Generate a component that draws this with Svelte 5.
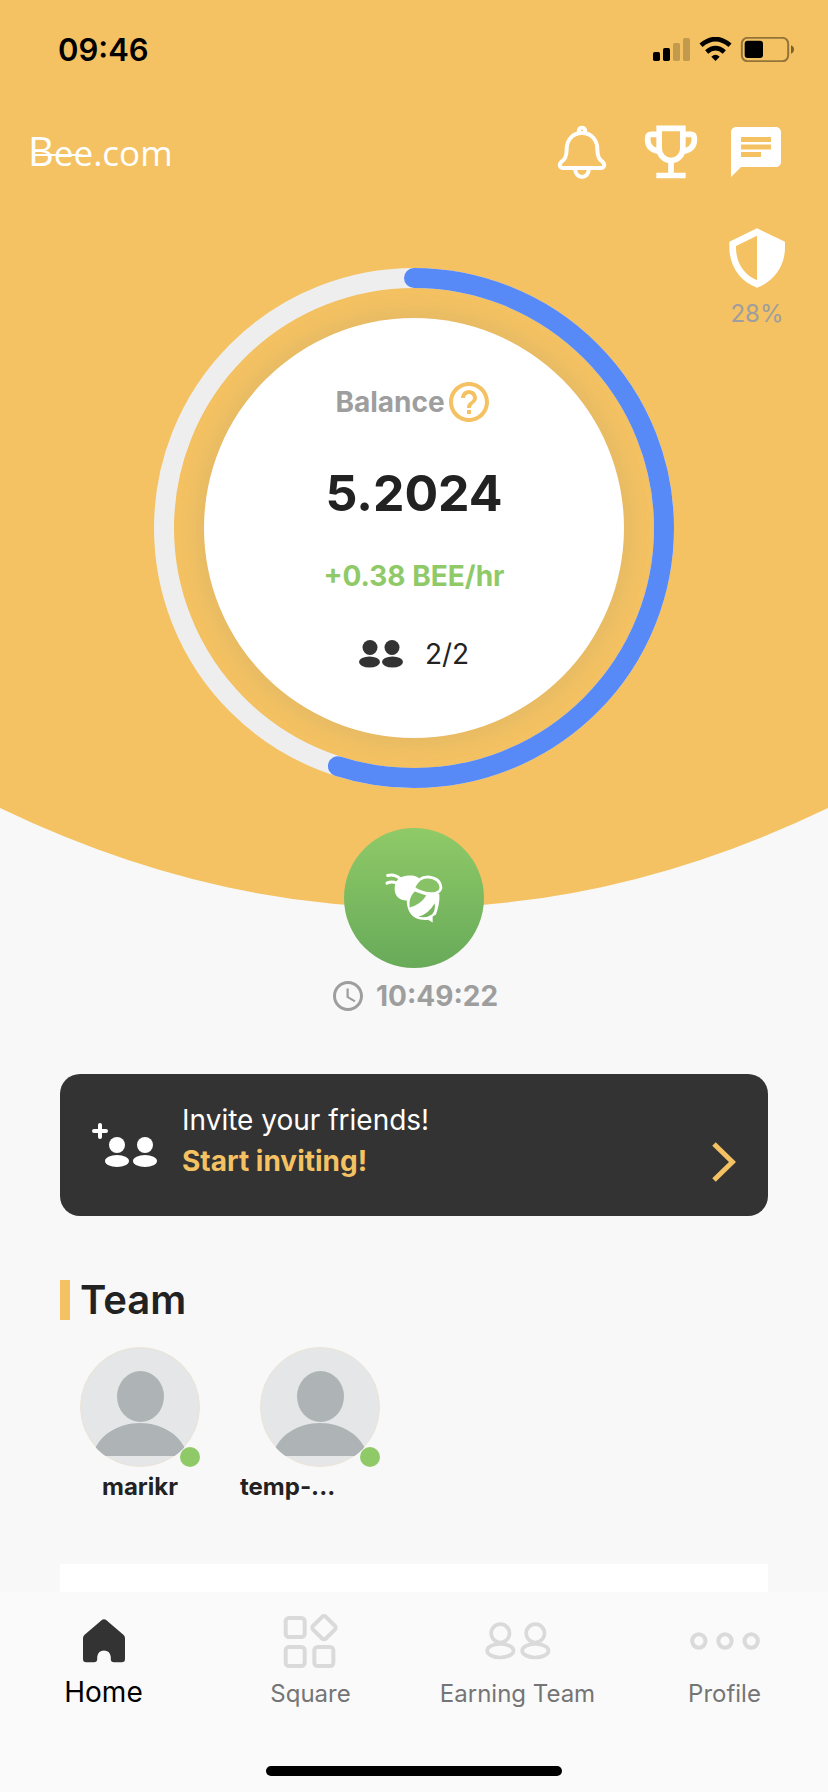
<script>
  const elapsed = 0.549;
  const radius = 250;
  const circumference = 2 * Math.PI * radius;

  const team = [
    { name: 'marikr', clipped: false },
    { name: 'temp-...', clipped: true }
  ];
</script>

<div class="app">
  <div class="hero">
    <div class="status">
      <span class="clock">09:46</span>
      <svg class="indicators" viewBox="339 111 423 75" aria-hidden="true">
        <rect x="339" y="156" width="21" height="27" rx="5" />
        <rect x="369" y="144" width="21" height="39" rx="5" />
        <g opacity=".2">
          <rect x="399" y="129" width="21" height="54" rx="5" />
          <rect x="429" y="114" width="21" height="69" rx="5" />
        </g>
        <g fill="none" stroke="#000" stroke-width="14">
          <path d="M483 136Q526.500 99 570 136" />
          <path d="M500 156Q526.500 133 553 156" />
        </g>
        <path d="M514 170Q526.500 158 539 170L526.500 183Z" />
        <rect x="605.500" y="113.500" width="139" height="70" rx="17" fill="none" stroke="#000" stroke-width="6" opacity=".4" />
        <rect x="614" y="122" width="55" height="52" rx="9" />
        <path d="M753 136Q762 140 762 148.500T753 161Z" opacity=".5" />
      </svg>
    </div>

    <header class="top">
      <a class="logo" href="#home"><span class="initial">B</span>ee.com</a>
      <div class="actions">
        <button aria-label="Notifications">
          <svg viewBox="34 366 180 180" fill="none" stroke="#fff" stroke-width="12" aria-hidden="true">
            <path d="M124 399C95 399 78 421 78 448C78 476 68 480 61 487C54 495 58 504 68 504H180C190 504 194 495 187 487C180 480 170 476 170 448C170 421 153 399 124 399Z" />
            <path d="M114.500 402V392a9.500 9 0 0 1 19 0V402" />
            <path d="M104 510a20 21 0 0 0 40 0" />
          </svg>
        </button>
        <button aria-label="Achievements">
          <svg viewBox="297 366 180 180" fill="none" stroke="#fff" stroke-width="17" aria-hidden="true">
            <path d="M357.500 385H428.500V446a35.500 35.500 0 0 1-71 0Z" />
            <path d="M358 403H334q-11 0-11 12v4q0 31 38 35" />
            <path d="M428 403H452q11 0 11 12v4q0 31-38 35" />
            <path d="M393 486V524M349 526.500H437" />
          </svg>
        </button>
        <button aria-label="Messages">
          <svg viewBox="0 0 24 24" fill="#fff" aria-hidden="true">
            <path d="M20 2H4c-1.100 0-1.990.9-1.990 2L2 22l4-4h14c1.100 0 2-.9 2-2V4c0-1.100-.9-2-2-2zM6 9h12v2H6V9zm8 5H6v-2h8v2zm4-6H6V6h12v2z" />
          </svg>
        </button>
      </div>
    </header>

    <div class="stage">
      <div class="ring">
        <svg class="dial" viewBox="0 0 520 520" aria-hidden="true">
          <circle cx="260" cy="260" r={radius} stroke="#eee" />
          <circle
            cx="260"
            cy="260"
            r={radius}
            stroke="#5789f7"
            stroke-linecap="round"
            stroke-dasharray="{circumference * elapsed} {circumference}"
            transform="rotate(-90 260 260)"
          />
        </svg>
        <div class="disc">
          <div class="balance">
            <span>Balance</span>
            <button aria-label="About the balance">
              <svg viewBox="0 0 24 24" fill="#f4c262" aria-hidden="true">
                <path d="M11 18h2v-2h-2v2zm1-16C6.480 2 2 6.480 2 12s4.480 10 10 10 10-4.480 10-10S17.520 2 12 2zm0 18c-4.410 0-8-3.590-8-8s3.590-8 8-8 8 3.590 8 8-3.590 8-8 8zm0-14c-2.210 0-4 1.790-4 4h2c0-1.100.9-2 2-2s2 .9 2 2c0 2-3 1.750-3 5h2c0-2.250 3-2.500 3-5 0-2.210-1.790-4-4-4z" />
              </svg>
            </button>
          </div>
          <strong class="amount">5.2024</strong>
          <span class="rate">+0.38 BEE/hr</span>
          <div class="members">
            <svg viewBox="0 0 44 28" fill="#333" aria-hidden="true">
              <circle cx="11" cy="7.500" r="7.500" /><circle cx="33" cy="7.500" r="7.500" />
              <ellipse cx="10.500" cy="22" rx="10.500" ry="5.500" /><ellipse cx="33.500" cy="22" rx="10.500" ry="5.500" />
            </svg>
            <span>2/2</span>
          </div>
        </div>
      </div>
      <a class="security" href="#security">
        <svg viewBox="563 684 180 180" fill="#fff" fill-rule="evenodd" aria-hidden="true">
          <path d="M653 685L737 725V742C737 800 702 845 653 863C604 845 570 800 570 742V725ZM653 707L590 738V745C591 790 615 825 653 841Z" />
        </svg>
        <span>28%</span>
      </a>
    </div>
  </div>

  <svg class="curve" viewBox="0 0 828 100" preserveAspectRatio="none" aria-hidden="true">
    <path d="M0 0Q414 199 828 0Z" fill="#f4c262" />
  </svg>

  <main>
    <div class="mining">
      <button class="bee" aria-label="Mine">
        <svg viewBox="255 185 180 155" aria-hidden="true">
          <g fill="none" stroke="#fff" stroke-width="9" stroke-linecap="round">
            <path d="M266 195Q285 189 302 203" />
            <path d="M264 218Q277 211 292 217" />
          </g>
          <path fill="#fff" d="M287 237C286 209 304 194 334 195C350 195 360 200 362 208L352 250L326 270C302 271 288 258 287 237Z" />
          <path fill="#fff" d="M326 250L350 238L421 250C423 272 418 293 411 312L401 318V336L387 328C365 331 344 324 333 307C323 291 321 267 326 250Z" />
          <path fill="#82bf64" d="M347 243L382 255Q364 283 332 291Q328 262 347 243Z" />
          <path fill="#78b660" d="M358 319Q390 309 407 278Q410 299 399 312Q382 324 358 319Z" />
          <path fill="#87c366" stroke="#fff" stroke-width="8" stroke-linejoin="round" d="M344 232Q358 199 386 199Q424 202 426 232Q421 251 395 249Q364 248 344 232Z" />
        </svg>
      </button>
      <div class="timer">
        <svg viewBox="0 0 24 24" fill="#9e9e9e" aria-hidden="true">
          <path d="M11.990 2C6.470 2 2 6.480 2 12s4.470 10 9.990 10C17.520 22 22 17.520 22 12S17.520 2 11.990 2zM12 20c-4.420 0-8-3.580-8-8s3.580-8 8-8 8 3.580 8 8-3.580 8-8 8zM12.500 7H11v6l5.250 3.150.75-1.230-4.500-2.670z" />
        </svg>
        <time>10:49:22</time>
      </div>
    </div>

    <a class="invite" href="#invite">
      <svg class="add" viewBox="0 0 66 44" fill="#fff" aria-hidden="true">
        <path d="M8 2V14M2 8H14" stroke="#fff" stroke-width="4" stroke-linecap="round" />
        <circle cx="25" cy="22" r="8" /><circle cx="53" cy="22" r="8" />
        <ellipse cx="25" cy="38" rx="12" ry="6" /><ellipse cx="53" cy="38" rx="12" ry="6" />
      </svg>
      <span class="pitch">
        <span>Invite your friends!</span>
        <b>Start inviting!</b>
      </span>
      <svg class="chevron" viewBox="0 0 24 40" fill="none" stroke="#f4c262" stroke-width="5" aria-hidden="true">
        <path d="M2 2L20.500 20L2 38" />
      </svg>
    </a>

    <section class="team">
      <h2>Team</h2>
      <ul>
        {#each team as member}
          <li>
            <span class="avatar">
              <svg viewBox="0 0 120 120" aria-hidden="true">
                <clipPath id="face-{member.name}"><circle cx="60" cy="60" r="60" /></clipPath>
                <circle cx="60" cy="60" r="59.500" fill="#e4e6e7" stroke="#ece5d6" />
                <g clip-path="url(#face-{member.name})" fill="#aeb4b6">
                  <ellipse cx="60.500" cy="49.500" rx="23.500" ry="25.500" />
                  <path d="M12 109C18 88 38 76 60 76S102 88 108 109Z" />
                </g>
              </svg>
              <i class="online"></i>
            </span>
            <span class="name" class:clipped={member.clipped}>{member.name}</span>
          </li>
        {/each}
      </ul>
    </section>

    <div class="panel"></div>
  </main>

  <footer>
    <nav>
      <a class="active" href="#home">
        <svg width="42" height="44" viewBox="250 239 127 131" fill="#333" aria-hidden="true">
          <path d="M307 241Q313.500 237 320 241L373 286Q377 290 377 296V359Q377 369 367 369H344Q334 369 334 359V352Q331 333 313.500 333T293 352V359Q293 369 283 369H260Q250 369 250 359V296Q250 290 254 286Z" />
        </svg>
        <span>Home</span>
      </a>
      <a href="#square">
        <svg width="56" height="56" viewBox="849 219 168 168" fill="none" stroke="#dadada" stroke-width="12" aria-hidden="true">
          <rect x="857" y="234" width="57" height="57" rx="10" />
          <rect x="857" y="321" width="57" height="57" rx="10" />
          <rect x="943" y="321" width="57" height="57" rx="10" />
          <rect x="945" y="236" width="54" height="54" rx="8" transform="rotate(45 972 263)" />
        </svg>
        <span>Square</span>
      </a>
      <a href="#earning-team">
        <svg width="66" height="38" viewBox="212 250 198 114" fill="none" stroke="#dadada" stroke-width="11" aria-hidden="true">
          <circle cx="258" cy="284" r="27.500" /><circle cx="363" cy="284" r="27.500" />
          <ellipse cx="258" cy="336" rx="39.500" ry="20.500" /><ellipse cx="363" cy="336" rx="39.500" ry="20.500" />
        </svg>
        <span>Earning Team</span>
      </a>
      <a href="#profile">
        <svg width="70" height="18" viewBox="826.500 276 210 54" fill="none" stroke="#dadada" stroke-width="12" aria-hidden="true">
          <circle cx="853" cy="303" r="20" /><circle cx="931.500" cy="303" r="20" /><circle cx="1010" cy="303" r="20" />
        </svg>
        <span>Profile</span>
      </a>
    </nav>
    <div class="home-bar"></div>
  </footer>
</div>

<style>
  :global(body) {
    background: #f8f8f8;
  }

  .app {
    display: flex;
    flex-direction: column;
    min-height: 100vh;
    font-family: Inter, sans-serif;
    font-size: 28px;
    color: #222;
  }

  svg {
    display: block;
    flex: none;
  }

  a {
    color: inherit;
    text-decoration: none;
  }

  button {
    display: block;
    padding: 0;
    border: 0;
    background: none;
    cursor: pointer;
  }

  .hero {
    background: #f4c262;
  }

  .status {
    display: flex;
    align-items: center;
    justify-content: space-between;
    height: 98px;
    padding: 0 34px 0 58px;
  }

  .clock {
    font-size: 31px;
    font-weight: 600;
    color: #000;
  }

  .indicators {
    width: 141px;
    height: 25px;
  }

  .top {
    display: flex;
    align-items: center;
    justify-content: space-between;
    height: 108px;
    padding: 0 42px 0 28px;
  }

  .logo {
    position: relative;
    font-family: 'Open Sans', sans-serif;
    font-size: 35px;
    line-height: 48px;
    color: #fff;
  }

  .logo::after {
    content: '';
    position: absolute;
    left: 6px;
    top: 27px;
    width: 48px;
    height: 2px;
    background: #fff;
  }

  .initial {
    font-size: 40px;
  }

  .actions {
    display: flex;
    gap: 27px;
  }

  .actions svg,
  .security svg {
    width: 60px;
    height: 60px;
  }

  .stage {
    display: grid;
    grid-template-columns: 1fr auto 1fr;
    padding: 22px 0 20px;
  }

  .ring {
    grid-column: 2;
    display: grid;
    place-items: center;
    width: 520px;
    height: 520px;
    margin-top: 40px;
  }

  .dial,
  .disc {
    grid-area: 1 / 1;
  }

  .dial {
    width: 100%;
    fill: none;
    stroke-width: 20;
  }

  .disc {
    display: flex;
    flex-direction: column;
    align-items: center;
    gap: 38px;
    box-sizing: border-box;
    width: 420px;
    height: 420px;
    padding-top: 60px;
    border-radius: 50%;
    background: #fff;
    box-shadow: 0 0 30px rgba(140, 140, 120, 0.24);
  }

  .balance,
  .members {
    display: flex;
    align-items: center;
    height: 48px;
  }

  .balance {
    font-weight: 700;
    color: #9e9e9e;
  }

  .balance svg {
    width: 48px;
    height: 48px;
  }

  .amount {
    font-size: 50px;
    line-height: 58px;
    font-weight: 700;
  }

  .rate {
    line-height: 32px;
    font-weight: 700;
    color: #90ca68;
  }

  .members {
    gap: 22px;
  }

  .members svg {
    width: 44px;
    height: 28px;
  }

  .security {
    grid-column: 3;
    justify-self: end;
    display: flex;
    flex-direction: column;
    align-items: center;
    align-self: start;
    gap: 10px;
    margin-right: 41px;
    font-size: 24px;
    line-height: 32px;
    color: #9e9e9e;
  }

  .curve {
    width: 100%;
    height: 100px;
  }

  main {
    flex: 1;
    display: flex;
    flex-direction: column;
    padding: 0 60px;
  }

  .mining {
    position: relative;
    display: flex;
    flex-direction: column;
    align-items: center;
    gap: 9px;
    margin-top: -80px;
  }

  .bee {
    display: grid;
    place-items: center;
    width: 140px;
    height: 140px;
    border-radius: 50%;
    background: linear-gradient(#90ca68, #67aa59);
  }

  .bee svg {
    width: 60px;
    height: 52px;
  }

  .timer {
    display: flex;
    align-items: center;
    gap: 10px;
    height: 37px;
    font-weight: 700;
    color: #9e9e9e;
  }

  .timer svg {
    width: 36px;
    height: 36px;
  }

  .invite {
    display: flex;
    align-items: center;
    box-sizing: border-box;
    min-height: 142px;
    margin-top: 60px;
    padding: 0 32px;
    border-radius: 20px;
    background: #333;
    color: #fff;
  }

  .add {
    width: 66px;
    height: 44px;
  }

  .pitch {
    flex: 1;
    display: flex;
    flex-direction: column;
    padding: 0 24px 8px;
    line-height: 41px;
  }

  .pitch b {
    font-weight: 700;
    color: #f4c262;
  }

  .chevron {
    align-self: flex-end;
    width: 24px;
    height: 40px;
    margin-bottom: 34px;
  }

  h2 {
    margin: 64px 0 27px;
    padding-left: 10px;
    border-left: 10px solid #f4c262;
    font-size: 40px;
    line-height: 40px;
    font-weight: 600;
  }

  ul {
    display: flex;
    gap: 20px;
    margin: 0;
    padding: 0;
    list-style: none;
  }

  li {
    display: flex;
    flex-direction: column;
    align-items: center;
    width: 160px;
  }

  .avatar {
    position: relative;
  }

  .avatar svg {
    width: 120px;
    height: 120px;
  }

  .online {
    position: absolute;
    right: 0;
    bottom: 0;
    width: 20px;
    height: 20px;
    border-radius: 50%;
    background: #90ca68;
  }

  .name {
    margin-top: 4px;
    font-size: 24px;
    line-height: 32px;
    font-weight: 700;
  }

  .name.clipped {
    align-self: flex-start;
  }

  .panel {
    flex: 1;
    min-height: 28px;
    margin-top: 61px;
    background: #fff;
  }

  footer {
    position: sticky;
    bottom: 0;
    background: #fafafa;
  }

  nav {
    display: grid;
    grid-template-columns: repeat(4, 1fr);
    height: 174px;
  }

  nav a {
    display: grid;
    grid-template-rows: 98px 32px;
    justify-items: center;
    align-items: center;
    align-content: start;
    font-size: 24px;
    line-height: 32px;
    color: #757575;
  }

  nav span {
    align-self: start;
    margin-top: -12px;
  }

  nav .active {
    font-size: 28px;
    line-height: 28px;
    color: #000;
  }

  .home-bar {
    width: 296px;
    height: 10px;
    margin: 0 auto 16px;
    border-radius: 5px;
    background: #000;
  }
</style>
